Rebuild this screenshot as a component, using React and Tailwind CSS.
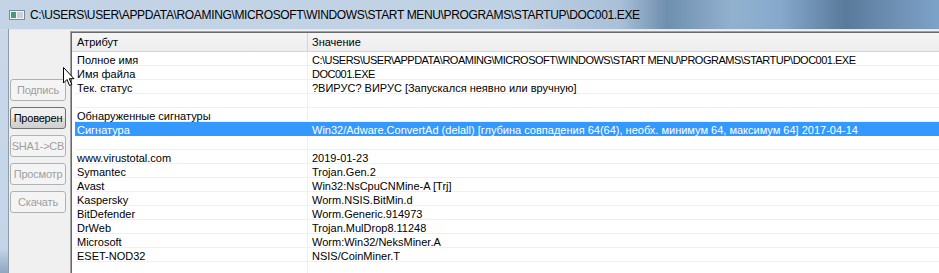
import React from "react";

const rows = [
  ["Полное имя", "C:\\USERS\\USER\\APPDATA\\ROAMING\\MICROSOFT\\WINDOWS\\START MENU\\PROGRAMS\\STARTUP\\DOC001.EXE", false, true],
  ["Имя файла", "DOC001.EXE", false, true],
  ["Тек. статус", "?ВИРУС? ВИРУС [Запускался неявно или вручную]"],
  ["", ""],
  ["Обнаруженные сигнатуры", ""],
  ["Сигнатура", "Win32/Adware.ConvertAd (delall) [глубина совпадения 64(64), необх. минимум 64, максимум 64] 2017-04-14", true],
  ["", ""],
  ["www.virustotal.com", "2019-01-23"],
  ["Symantec", "Trojan.Gen.2"],
  ["Avast", "Win32:NsCpuCNMine-A [Trj]"],
  ["Kaspersky", "Worm.NSIS.BitMin.d"],
  ["BitDefender", "Worm.Generic.914973"],
  ["DrWeb", "Trojan.MulDrop8.11248"],
  ["Microsoft", "Worm:Win32/NeksMiner.A"],
  ["ESET-NOD32", "NSIS/CoinMiner.T"],
];

const buttons = [
  { label: "Подпись", enabled: false },
  { label: "Проверен", enabled: true },
  { label: "SHA1->CB", enabled: false },
  { label: "Просмотр", enabled: false },
  { label: "Скачать", enabled: false },
];

function WinButton({ label, enabled }) {
  return (
    <div
      className={
        "w-[56px] h-[22px] rounded-[3px] border flex items-center justify-center text-[11px] tracking-[-0.2px] whitespace-nowrap " +
        (enabled
          ? "border-[#707070] text-black bg-[linear-gradient(180deg,#f2f2f2_0%,#ebebeb_50%,#dddddd_51%,#cfcfcf_100%)]"
          : "border-[#adb2b5] text-[#a0a0a0] bg-[#f4f4f4]")
      }
    >
      {label}
    </div>
  );
}

function Row({ attr, value, selected, caps }) {
  return (
    <div className="flex h-[14px] pl-[3px]">
      <div
        className={
          "flex flex-1 border-b " +
          (selected ? "bg-[#3399ff] text-white border-[#3399ff]" : "border-[#f0f0f0]")
        }
      >
        <div
          className={
            "w-[233px] shrink-0 pl-[2px] pt-[3px] leading-[10px] whitespace-nowrap border-r " +
            (selected ? "border-[#3399ff]" : "border-[#f0f0f0]")
          }
        >
          {attr}
        </div>
        <div className={"pl-[4px] pt-[3px] leading-[10px] whitespace-nowrap " + (caps ? "tracking-[-0.5px]" : "")}>
          {value}
        </div>
      </div>
    </div>
  );
}

export default function App() {
  return (
    <div
      className="w-[939px] h-[273px] overflow-hidden relative flex flex-col bg-[#c8d8ea] text-black"
      style={{ fontFamily: '"Liberation Sans", Arial, sans-serif' }}
    >
      {/* title bar */}
      <div className="h-[29px] shrink-0 flex items-center gap-[5px] pl-[9px] bg-[linear-gradient(90deg,#c3d4e6_0%,#bfd1e4_55%,#a9c0d8_66%,#6f8fae_71%,#92b1cf_78%,#86a9cc_83%,#5a7a9b_90%,#7ea3c8_100%)]">
        <svg width="16" height="10" viewBox="0 0 16 10">
          <rect x="0.5" y="0.5" width="15" height="9" fill="#f4f4f4" stroke="#7a8a99" />
          <rect x="2" y="2" width="5" height="6" fill="#3f9f7a" />
          <rect x="8" y="2" width="6" height="6" fill="#c9d2da" />
        </svg>
        <span className="text-[12px] tracking-[-0.35px] whitespace-nowrap">
          C:\USERS\USER\APPDATA\ROAMING\MICROSOFT\WINDOWS\START MENU\PROGRAMS\STARTUP\DOC001.EXE
        </span>
      </div>

      <div className="flex flex-1 min-h-0">
        {/* left window frame */}
        <div className="w-[8px] shrink-0 bg-[linear-gradient(180deg,#c8d8ea_0%,#c4d5e7_90%,#8ea6bf_100%)]" />
        <div className="w-px shrink-0 bg-[#8d9cab]" />

        {/* client */}
        <div className="flex-1 flex bg-[#f0f0f0] border-t border-[#e4e8ec] pt-px min-w-0">
          <div className="w-[61px] shrink-0 flex flex-col gap-[6px] pl-px pt-[48px]">
            {buttons.map((b) => (
              <WinButton key={b.label} {...b} />
            ))}
          </div>

          <div className="flex-1 min-w-0 border-t border-l border-[#a0a0a0]">
            <div className="h-full flex flex-col border-t border-l border-[#696969] bg-white text-[11px]">
              <div className="h-[19px] shrink-0 flex border-b border-[#d5d5d5] bg-[linear-gradient(180deg,#f5f5f5_0%,#ededed_100%)]">
                <div className="w-[236px] shrink-0 pl-[5px] pt-px flex items-center border-r border-[#d5d5d5]">
                  Атрибут
                </div>
                <div className="pl-[4px] pt-px flex items-center">Значение</div>
              </div>
              {rows.map(([a, v, s, c], i) => (
                <Row key={i} attr={a} value={v} selected={s} caps={c} />
              ))}
              <div className="flex-1 flex pl-[3px]">
                <div className="w-[233px] border-r border-[#f0f0f0]" />
              </div>
            </div>
          </div>
        </div>
      </div>

      {/* mouse cursor */}
      <svg className="absolute left-[63px] top-[67px]" width="13" height="20" viewBox="0 0 13 20">
        <path
          d="M0.5 0.5 L0.5 16 L4 12.5 L6.5 18.5 L8.8 17.5 L6.3 11.7 L11 11.7 Z"
          fill="#ffffff"
          stroke="#000000"
          strokeWidth="1"
          strokeLinejoin="round"
        />
      </svg>
    </div>
  );
}
